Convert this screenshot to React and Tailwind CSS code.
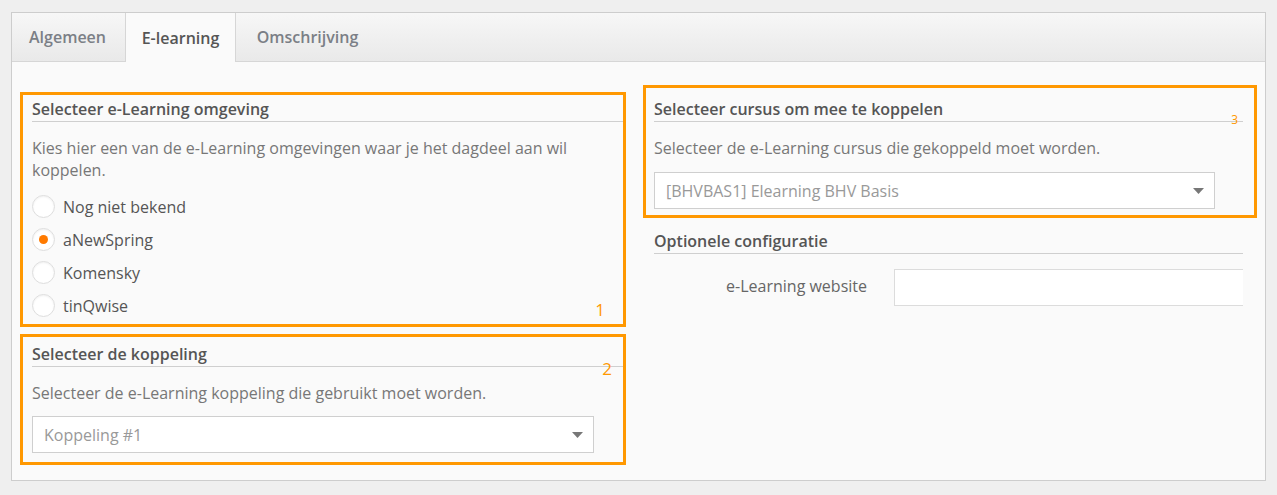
import React, { useState } from 'react';

const Caret = () => (
    <svg width="11" height="6" viewBox="0 0 11 6" className="shrink-0">
        <path d="M0 0 H11 L5.5 6 Z" fill="#777" />
    </svg>
);

const SelectBox = ({ value, className = '' }) => (
    <div className={`h-[37px] bg-white border border-[#cfcfcf] flex items-center justify-between pl-[11px] pr-[10px] ${className}`}>
        <span className="text-[16px] text-[#999]">{value}</span>
        <Caret />
    </div>
);

const Radio = ({ checked, label, onClick }) => (
    <label className="h-[33px] flex items-center gap-[8px] cursor-pointer" onClick={onClick}>
        <span className="w-[23px] h-[23px] rounded-full bg-white border border-[#dedede] shadow-[inset_0_1px_2px_rgba(0,0,0,0.06)] flex items-center justify-center">
            {checked && <span className="w-[9px] h-[9px] rounded-full bg-[#ff7a00]" />}
        </span>
        <span className="text-[16px] text-[#555]">{label}</span>
    </label>
);

const App = () => {
    const [env, setEnv] = useState('aNewSpring');
    const envs = ['Nog niet bekend', 'aNewSpring', 'Komensky', 'tinQwise'];
    const tabs = ['Algemeen', 'E-learning', 'Omschrijving'];

    return (
        <div className="min-h-[495px] bg-[#efefef] pt-[12px] pl-[11px] font-['Open_Sans',sans-serif]">
            <div className="w-[1255px] h-[469px] border border-[#cdcdcd] bg-[#fafafa] flex flex-col">
                {/* tab bar */}
                <div className="h-[49px] flex bg-gradient-to-b from-[#f7f7f7] to-[#e9e9e9] border-b border-[#d6d6d6]">
                    {tabs.map(t => (
                        t === 'E-learning' ? (
                            <div key={t} className="w-[111px] h-[49px] -mb-px flex items-center justify-center bg-[#fafafa] border-x border-[#d6d6d6] text-[16px] font-semibold text-[#555]">
                                {t}
                            </div>
                        ) : (
                            <div key={t} className={`${t === 'Algemeen' ? 'w-[113px] pr-[2px]' : 'w-[143px]'} flex items-center justify-center text-[16px] font-semibold text-[#7b7f86]`}>
                                {t}
                            </div>
                        )
                    ))}
                </div>

                <div className="flex pl-[8px]">
                    {/* left column */}
                    <div className="w-[606px] pt-[30px] flex flex-col gap-[7px]">
                        <div className="relative h-[235px] border-[3px] border-[#ff9800] pt-[4px]">
                            <h3 className="ml-[9px] pb-[2px] border-b border-[#cfcfcf] text-[16px] font-semibold text-[#555] leading-[20px]">
                                Selecteer e-Learning omgeving
                            </h3>
                            <div className="pl-[9px] pr-[29px]">
                                <p className="mt-[15px] text-[16px] leading-[22px] text-[#777]">
                                    Kies hier een van de e-Learning omgevingen waar je het dagdeel aan wil koppelen.
                                </p>
                                <div className="mt-[9px] flex flex-col">
                                    {envs.map(e => (
                                        <Radio key={e} label={e} checked={env === e} onClick={() => setEnv(e)} />
                                    ))}
                                </div>
                            </div>
                            <span className="absolute right-[18px] bottom-[2px] text-[17px] text-[#ff9800]">1</span>
                        </div>

                        <div className="relative h-[131px] border-[3px] border-[#ff9800] pt-[7px]">
                            <h3 className="ml-[9px] pb-[2px] border-b border-[#cfcfcf] text-[16px] font-semibold text-[#555] leading-[20px]">
                                Selecteer de koppeling
                            </h3>
                            <div className="pl-[9px] pr-[29px]">
                                <p className="mt-[15px] text-[16px] leading-[22px] text-[#777]">
                                    Selecteer de e-Learning koppeling die gebruikt moet worden.
                                </p>
                                <SelectBox value="Koppeling #1" className="mt-[12px]" />
                            </div>
                            <span className="absolute right-[11px] top-[19px] text-[17px] text-[#ff9800]">2</span>
                        </div>
                    </div>

                    {/* right column */}
                    <div className="ml-[17px] w-[614px] pt-[23px]">
                        <div className="relative h-[133px] border-[3px] border-[#ff9800] pt-[11px]">
                            <h3 className="ml-[8px] mr-[11px] pb-[2px] border-b border-[#cfcfcf] text-[16px] font-semibold text-[#555] leading-[20px]">
                                Selecteer cursus om mee te koppelen
                            </h3>
                            <div className="pl-[8px] pr-[39px]">
                                <p className="mt-[15px] text-[16px] leading-[22px] text-[#777]">
                                    Selecteer de e-Learning cursus die gekoppeld moet worden.
                                </p>
                                <SelectBox value="[BHVBAS1] Elearning BHV Basis" className="mt-[13px]" />
                            </div>
                            <span className="absolute right-[16px] top-[23px] text-[12px] text-[#ff9800]">3</span>
                        </div>

                        <div className="ml-[11px] mr-[14px] mt-[13px]">
                            <h3 className="pb-[2px] border-b border-[#cfcfcf] text-[16px] font-semibold text-[#555] leading-[20px]">
                                Optionele configuratie
                            </h3>
                            <div className="mt-[15px] flex items-center">
                                <span className="w-[213px] text-right text-[16px] leading-[22px] text-[#666] -translate-y-[2px]">
                                    e-Learning website
                                </span>
                                <input className="ml-[27px] flex-1 h-[37px] bg-white border border-r-0 border-[#dcdcdc] outline-none" />
                            </div>
                        </div>
                    </div>
                </div>
            </div>
        </div>
    );
};

export default App;
